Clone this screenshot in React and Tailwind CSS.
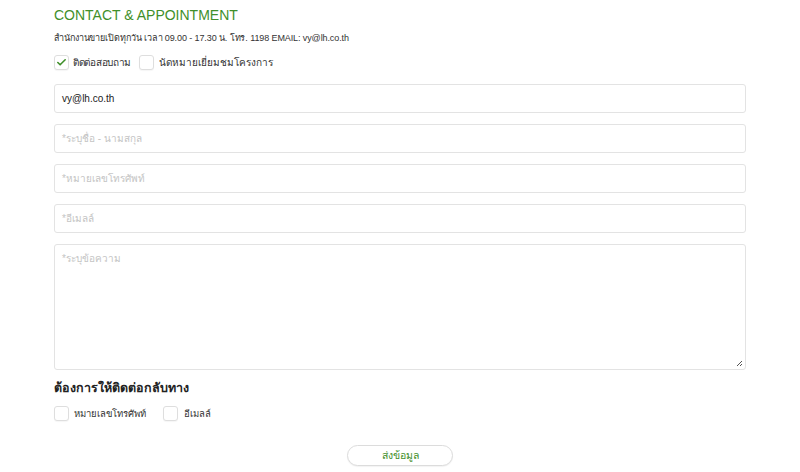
import { Check } from "lucide-react";

function Box({ checked }) {
  return (
    <span className="flex h-[15px] w-[15px] shrink-0 items-center justify-center rounded-[3px] border border-[#dedede] bg-white shadow-[0_1px_1px_rgba(0,0,0,0.04)]">
      {checked ? <Check className="h-[11px] w-[11px] text-[#3f8f2a]" strokeWidth={3.5} /> : null}
    </span>
  );
}

function Field({ value, placeholder }) {
  return (
    <div className="flex h-[29px] items-center rounded-[3px] border border-[#e3e3e3] bg-white px-[7px] text-[10px]">
      {value ? <span className="text-[#222]">{value}</span> : <span className="text-[#c4c4c4]">{placeholder}</span>}
    </div>
  );
}

export default function App() {
  return (
    <div className="h-[472px] w-[800px] bg-white font-['Liberation_Sans',sans-serif]">
      <div className="ml-[54px] w-[692px] pt-[7px]">
        <h2 className="text-[14px] leading-[16px] text-[#3f8f2a]">CONTACT &amp; APPOINTMENT</h2>
        <p className="mt-[9px] text-[9px] leading-[12px] tracking-[-0.1px] text-[#333]">
          สำนักงานขายเปิดทุกวัน เวลา 09.00 - 17.30 น. โทร. 1198 EMAIL: vy@lh.co.th
        </p>
        <div className="mt-[11px] flex h-[15px] items-center text-[10px] leading-[15px] text-[#333]">
          <Box checked />
          <span className="ml-[4px] tracking-[-0.3px]">ติดต่อสอบถาม</span>
          <span className="ml-[8px]"><Box /></span>
          <span className="ml-[5px]">นัดหมายเยี่ยมชมโครงการ</span>
        </div>

        <div className="mt-[14px] flex flex-col gap-[11px]">
          <Field value="vy@lh.co.th" />
          <Field placeholder="*ระบุชื่อ - นามสกุล" />
          <Field placeholder="*หมายเลขโทรศัพท์" />
          <Field placeholder="*อีเมลล์" />
          <div className="relative h-[126px] rounded-[3px] border border-[#e3e3e3] bg-white px-[7px] pt-[6px] text-[10px] text-[#c4c4c4]">
            *ระบุข้อความ
            <svg className="absolute bottom-[2px] right-[2px]" width="7" height="7" viewBox="0 0 7 7">
              <path d="M6 1L1 6M6 4L4 6" stroke="#555" strokeWidth="1" />
            </svg>
          </div>
        </div>

        <h3 className="mt-[10px] text-[12.5px] font-bold leading-[16px] text-[#222]">ต้องการให้ติดต่อกลับทาง</h3>
        <div className="mt-[10px] flex h-[15px] items-center text-[9.5px] leading-[15px] text-[#333]">
          <Box />
          <span className="ml-[5px]">หมายเลขโทรศัพท์</span>
          <span className="ml-[17px]"><Box /></span>
          <span className="ml-[6px]">อีเมลล์</span>
        </div>

        <div className="mt-[24px] flex justify-center">
          <button className="h-[21px] w-[106px] rounded-full border border-[#dcdcdc] bg-white text-[10.5px] text-[#3f8f2a] shadow-[0_1px_1px_rgba(0,0,0,0.05)]">
            ส่งข้อมูล
          </button>
        </div>
      </div>
    </div>
  );
}
